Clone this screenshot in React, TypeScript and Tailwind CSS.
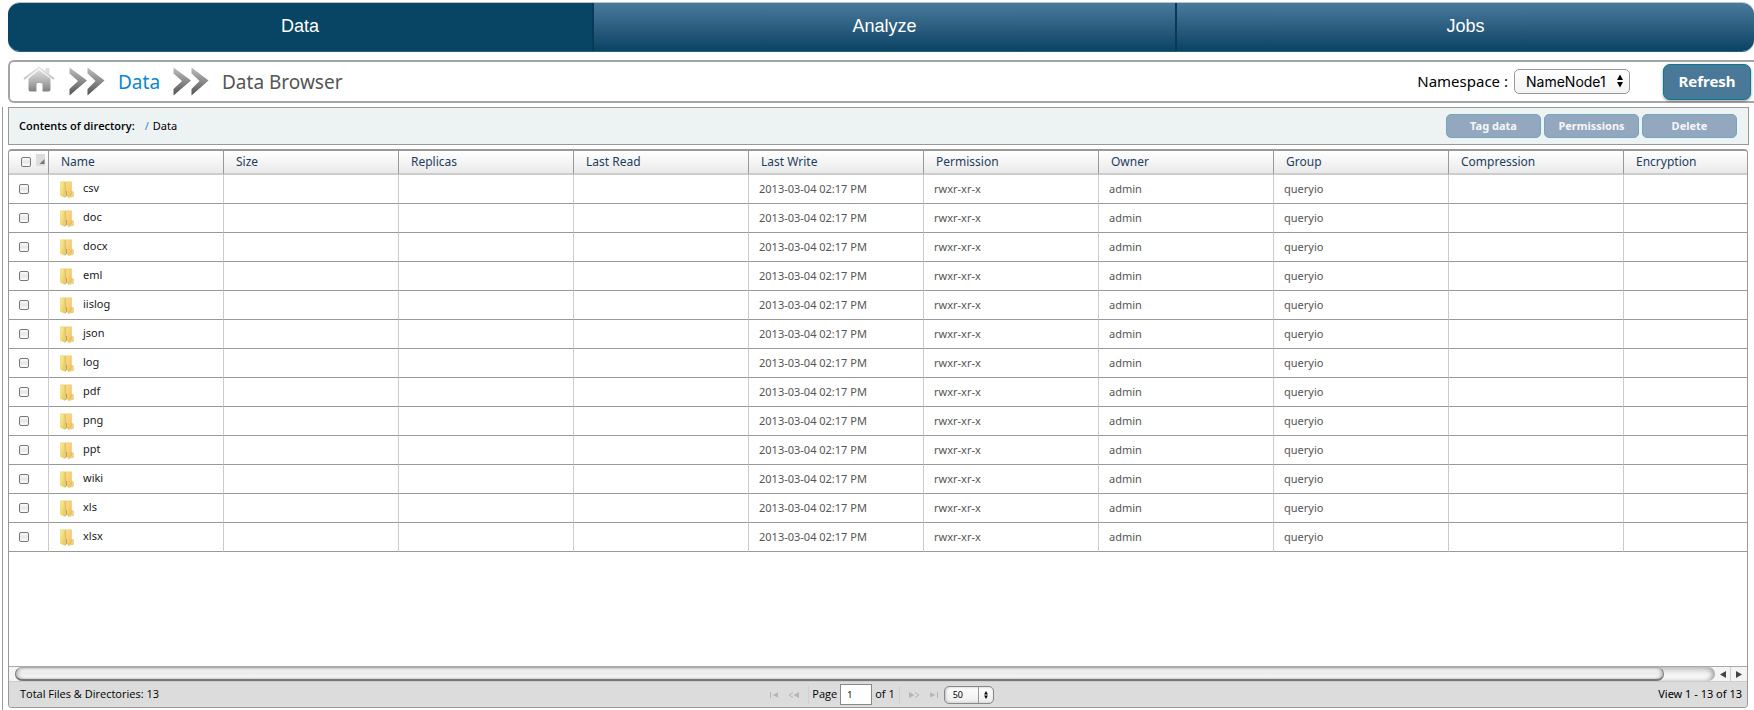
import React from "react";

const tabs = ["Data", "Analyze", "Jobs"];

const columns = [
  "Name",
  "Size",
  "Replicas",
  "Last Read",
  "Last Write",
  "Permission",
  "Owner",
  "Group",
  "Compression",
  "Encryption",
];

const folders = [
  "csv",
  "doc",
  "docx",
  "eml",
  "iislog",
  "json",
  "log",
  "pdf",
  "png",
  "ppt",
  "wiki",
  "xls",
  "xlsx",
];

const checkboxClass =
  "block size-[10px] appearance-none rounded-[2px] border border-[#777] bg-linear-to-b from-[#fdfdfd] via-[#e6e6e6] to-white checked:bg-[#497a9b]";

function HomeIcon() {
  return (
    <svg width="32" height="27" viewBox="0 0 32 27" aria-hidden="true">
      <defs>
        <linearGradient id="home" x1="0" y1="0" x2="0" y2="1">
          <stop offset="0" stopColor="#dedede" />
          <stop offset="0.5" stopColor="#b4b4b4" />
          <stop offset="1" stopColor="#808080" />
        </linearGradient>
        <linearGradient id="roof" x1="0" y1="0" x2="0" y2="1">
          <stop offset="0" stopColor="#e8e8e8" />
          <stop offset="1" stopColor="#c2c2c2" />
        </linearGradient>
      </defs>
      <path
        d="M16 4 27.500 12.500v11a2 2 0 0 1-2 2H19.500v-7a1.500 1.500 0 0 0-1.500-1.500h-3A1.500 1.500 0 0 0 13.500 18.500v7H7.500a2 2 0 0 1-2-2V12.500Z"
        fill="url(#home)"
      />
      <path d="M1 13 16 1.500 31 13" fill="none" stroke="url(#roof)" strokeWidth="2" />
      <path d="M22.500 2H26.500v6.500l-4-3Z" fill="#dedede" />
    </svg>
  );
}

function DoubleChevron({ id }: { id: string }) {
  return (
    <svg width="36" height="29" viewBox="0 0 36 29" aria-hidden="true">
      <defs>
        <linearGradient id={id} x1="0" y1="0" x2="0" y2="1">
          <stop offset="0" stopColor="#bcbcbc" />
          <stop offset="0.5" stopColor="#8a8a8a" />
          <stop offset="1" stopColor="#505050" />
        </linearGradient>
      </defs>
      <path d="M0.500 0.500 18 13.500 0.500 28.500V22L9 14 0.500 6.500Z" fill={`url(#${id})`} />
      <path d="M18.500 0.500 35.500 13.500 18.500 28.500V22L26.500 14 18.500 6.500Z" fill={`url(#${id})`} />
    </svg>
  );
}

function FolderIcon() {
  return (
    <svg width="14" height="17" viewBox="0 0 14 17" aria-hidden="true" className="shrink-0">
      <defs>
        <linearGradient id="folderFront" x1="0" y1="0" x2="1" y2="1">
          <stop offset="0" stopColor="#fbf0a0" />
          <stop offset="1" stopColor="#e8c94c" />
        </linearGradient>
        <linearGradient id="folderBack" x1="0" y1="0" x2="1" y2="1">
          <stop offset="0" stopColor="#ffdf94" />
          <stop offset="1" stopColor="#f5bd5a" />
        </linearGradient>
      </defs>
      <path d="M6 0.800h5.500v14L6 15Z" fill="url(#folderBack)" stroke="#e9c06a" strokeWidth="0.500" />
      <path d="M11.300 10.800h2v4.500l-5 1.200-.5-1 3.500-1.500Z" fill="#f4dd84" stroke="#cfa945" strokeWidth="0.500" />
      <path d="M0.500 0.800H4.500v15.500L0.500 14.500Z" fill="url(#folderFront)" stroke="#e3cc60" strokeWidth="0.500" />
      <path d="M4.500 0.800H6V10l-.5 6-1 .3Z" fill="#dfc462" />
      <path d="M6.500 10v4.200L5 16.200" fill="none" stroke="#a08c48" strokeWidth="0.700" />
    </svg>
  );
}

function SelectArrows({ className }: { className: string }) {
  return (
    <svg viewBox="0 0 6 13" className={className} aria-hidden="true">
      <path d="M3 0 6 5.500H0ZM3 13 0 7.500H6Z" fill="currentColor" />
    </svg>
  );
}

function PagerButton({ label, children }: { label: string; children: React.ReactNode }) {
  return (
    <button type="button" disabled aria-label={label} className="flex h-5 w-5 items-center justify-center">
      <svg width="12" height="6" viewBox="0 0 12 6" fill="#b5b5b5" stroke="#b5b5b5" aria-hidden="true">
        {children}
      </svg>
    </button>
  );
}

function MainNav() {
  return (
    <nav className="ml-2 grid h-[50px] grid-cols-[586fr_583fr_577fr] overflow-hidden rounded-xl border-t border-b border-t-[#b5c4cf] border-b-[#2a5c7c]">
      {tabs.map((tab, i) => (
        <a
          key={tab}
          href="#"
          aria-current={i === 0 ? "page" : undefined}
          className={
            "flex items-center justify-center pb-[2px] font-['Liberation_Sans',sans-serif] text-lg text-white " +
            (i === 0 ? "bg-[#084463]" : "bg-linear-to-b from-[#497a9b] to-[#084365]") +
            (i < 2 ? " border-r-2 border-[#083a58]" : "")
          }
        >
          {tab}
        </a>
      ))}
    </nav>
  );
}

function Breadcrumb() {
  return (
    <header className="mt-2 ml-2 flex h-[43px] items-center rounded-l-md border-2 border-r-0 border-[#a5a5a5] pr-[3px] pl-[13px]">
      <div className="flex items-center text-[19px] leading-6">
        <a href="#" aria-label="Home" className="mr-[14px] pb-1">
          <HomeIcon />
        </a>
        <DoubleChevron id="chevronA" />
        <a href="#" className="ml-[13px] w-[42px] whitespace-nowrap text-[#0a87d1]">
          Data
        </a>
        <span className="ml-[13px]">
          <DoubleChevron id="chevronB" />
        </span>
        <span className="ml-[13px] text-[#555]">Data Browser</span>
      </div>
      <div className="ml-auto flex items-center">
        <label htmlFor="namespace" className="text-[15px] text-black">
          Namespace :
        </label>
        <div className="relative ml-[6px]">
          <select
            id="namespace"
            className="block h-[25px] w-[116px] appearance-none rounded-[5px] border border-[#999] bg-linear-to-b from-white to-[#f3f3f3] pl-[11px] font-[Inter,sans-serif] text-sm leading-5 text-black"
          >
            <option>NameNode1</option>
          </select>
          <SelectArrows className="pointer-events-none absolute top-[5px] right-[7px] h-[14px] w-[6px]" />
        </div>
        <button
          type="button"
          className="ml-[33px] h-9 w-[88px] rounded-[7px] border border-[#087a90] bg-[#497898] text-[15px] font-bold text-white shadow-[0_1px_3px_rgba(0,0,0,0.4)]"
        >
          Refresh
        </button>
      </div>
    </header>
  );
}

function DirectoryBar() {
  return (
    <div className="mr-[5px] flex h-[38px] items-center border border-[#999] bg-[#edf2f3] pr-[11px] pl-[10px] text-[11px] text-black">
      <span className="font-['Open_Sans',sans-serif] font-semibold">Contents of directory:</span>
      <a href="#" className="ml-[10px] text-[#3a87d8]">
        /
      </a>
      <span className="ml-1">Data</span>
      <div className="ml-auto flex gap-[3px]">
        {["Tag data", "Permissions", "Delete"].map((label) => (
          <button
            key={label}
            type="button"
            className="h-6 w-[95px] rounded-[5px] border border-[#6fa8bd] bg-[#93a7be] text-[11px] font-bold text-[#f4f7fa]"
          >
            {label}
          </button>
        ))}
      </div>
    </div>
  );
}

function FileTable() {
  return (
    <table className="w-full table-fixed border-separate border-spacing-0">
      <colgroup>
        <col className="w-10" />
        {columns.map((c, i) => (
          <col key={c} className={i < columns.length - 1 ? "w-[175px]" : ""} />
        ))}
      </colgroup>
      <thead>
        <tr className="h-6 bg-linear-to-b from-white to-[#e8e8e8]">
          <th className="border-r border-b-2 border-r-[#999] border-b-[#ccc] p-0 align-top">
            <div className="flex items-start pt-[3px] pl-3">
              <input type="checkbox" aria-label="Select all" className={checkboxClass + " mt-[3px]"} />
              <svg width="9" height="12" viewBox="0 0 9 12" className="ml-[5px]" aria-hidden="true">
                <path d="M0 0h9v12H0Z" fill="#dcdcdc" />
                <path d="M3.500 10 8.500 5v5Z" fill="#777" />
              </svg>
            </div>
          </th>
          {columns.map((c, i) => (
            <th
              key={c}
              scope="col"
              className={
                "border-b-2 border-[#ccc] py-0 pr-0 pl-3 text-left text-xs leading-5 font-normal text-[#1c3f61] " +
                (i < columns.length - 1 ? "border-r border-r-[#999]" : "")
              }
            >
              {c}
            </th>
          ))}
        </tr>
      </thead>
      <tbody>
        {folders.map((name) => {
          const values = ["", "", "", "2013-03-04 02:17 PM", "rwxr-xr-x", "admin", "queryio", "", ""];
          return (
            <tr key={name} className="h-[29px] text-[11px] leading-4 text-[#555]">
              <td className="border-r border-b border-r-[#ccc] border-b-[#999] py-0 pr-0 pl-[10px]">
                <input type="checkbox" aria-label={`Select ${name}`} className={checkboxClass} />
              </td>
              <td className="border-r border-b border-r-[#ccc] border-b-[#999] py-0 pr-0 pl-[11px] text-[#222]">
                <a href="#" className="flex items-center gap-[9px]">
                  <FolderIcon />
                  <span className="pb-[2px]">{name}</span>
                </a>
              </td>
              {values.map((v, i) => (
                <td
                  key={i}
                  className={
                    "border-b border-[#999] py-0 pr-0 pl-[10px] " +
                    (i < values.length - 1 ? "border-r border-r-[#ccc]" : "")
                  }
                >
                  {v}
                </td>
              ))}
            </tr>
          );
        })}
      </tbody>
    </table>
  );
}

function ScrollBar() {
  return (
    <div className="flex h-[15px] border-t border-[#aaa] bg-[#f4f4f4]">
      <div className="ml-[6px] flex-1 rounded-full bg-linear-to-b from-[#cfcfcf] via-[#f2f2f2] to-white shadow-[inset_-3px_0_4px_#aaa]">
        <div className="h-[14px] w-[97%] rounded-full border border-b-2 border-[#777] border-t-[#aaa] bg-linear-to-b from-[#f6f6f6] via-[#ebebeb] to-white shadow-[inset_2px_0_3px_#bbb,inset_-2px_0_3px_#bbb]" />
      </div>
      <button type="button" aria-label="Scroll left" className="flex w-4 items-center justify-center border-r border-[#ccc]">
        <svg width="6" height="7" viewBox="0 0 6 7" aria-hidden="true">
          <path d="M6 0v7L0 3.500Z" fill="#444" />
        </svg>
      </button>
      <button type="button" aria-label="Scroll right" className="flex w-4 items-center justify-center">
        <svg width="6" height="7" viewBox="0 0 6 7" aria-hidden="true">
          <path d="M0 0v7l6-3.500Z" fill="#444" />
        </svg>
      </button>
    </div>
  );
}

function Pager() {
  return (
    <footer className="grid h-[26px] grid-cols-[1fr_auto_1fr] items-center border-t border-[#ccc] bg-[#dcdcdc] pr-[5px] pl-[11px] text-[11px] text-black">
      <span className="font-['Open_Sans',sans-serif]">Total Files &amp; Directories: 13</span>
      <div className="mr-1 flex items-center">
        <PagerButton label="First page">
          <path d="M2.500 0v6" fill="none" />
          <path d="M10 0.500v5L4.500 3Z" stroke="none" />
        </PagerButton>
        <PagerButton label="Previous page">
          <path d="M5 0.500 1 3l4 2.500" fill="none" />
          <path d="M11 0v6L5.500 3Z" stroke="none" />
        </PagerButton>
        <span className="mr-[3px] ml-1 h-[18px] w-px bg-[#d0d0d0]" />
        <label htmlFor="page" className="font-['Open_Sans',sans-serif]">
          Page
        </label>
        <input
          id="page"
          type="text"
          defaultValue="1"
          className="mx-[3px] h-[21px] w-[32px] border border-[#888] bg-white pl-[6px] text-[9px] text-black"
        />
        <span className="font-['Open_Sans',sans-serif]">of 1</span>
        <span className="mx-1 h-[18px] w-px bg-[#d0d0d0]" />
        <PagerButton label="Next page">
          <path d="M1 0v6l5.500-3Z" stroke="none" />
          <path d="M7 0.500 11 3 7 5.500" fill="none" />
        </PagerButton>
        <PagerButton label="Last page">
          <path d="M2 0.500v5L7.500 3Z" stroke="none" />
          <path d="M9.500 0v6" fill="none" />
        </PagerButton>
        <div className="relative">
          <select
            aria-label="Rows per page"
            className="block h-[18px] w-[50px] appearance-none rounded-[5px] border border-[#888] bg-linear-to-b from-white to-[#ededed] pl-2 text-[9px] leading-4 text-black shadow-[inset_1px_0_3px_#bbb]"
          >
            <option>50</option>
          </select>
          <span className="pointer-events-none absolute top-px right-[15px] h-4 w-px bg-[#999]" />
          <SelectArrows className="pointer-events-none absolute top-[5px] right-[6px] h-2 w-[4px]" />
        </div>
      </div>
      <span className="text-right">View 1 - 13 of 13</span>
    </footer>
  );
}

export default function App() {
  return (
    <div className="flex min-h-screen flex-col bg-white pt-[2px] font-['Noto_Sans',sans-serif]">
      <MainNav />
      <Breadcrumb />
      <main className="mt-1 ml-[2px] flex flex-1 flex-col border-l border-[#999] pb-[2px] pl-[5px]">
        <DirectoryBar />
        <section className="mt-1 mr-[6px] flex flex-1 flex-col overflow-hidden rounded-[4px] border border-t-2 border-[#999]">
          <div className="flex-1">
            <FileTable />
          </div>
          <ScrollBar />
          <Pager />
        </section>
      </main>
    </div>
  );
}
